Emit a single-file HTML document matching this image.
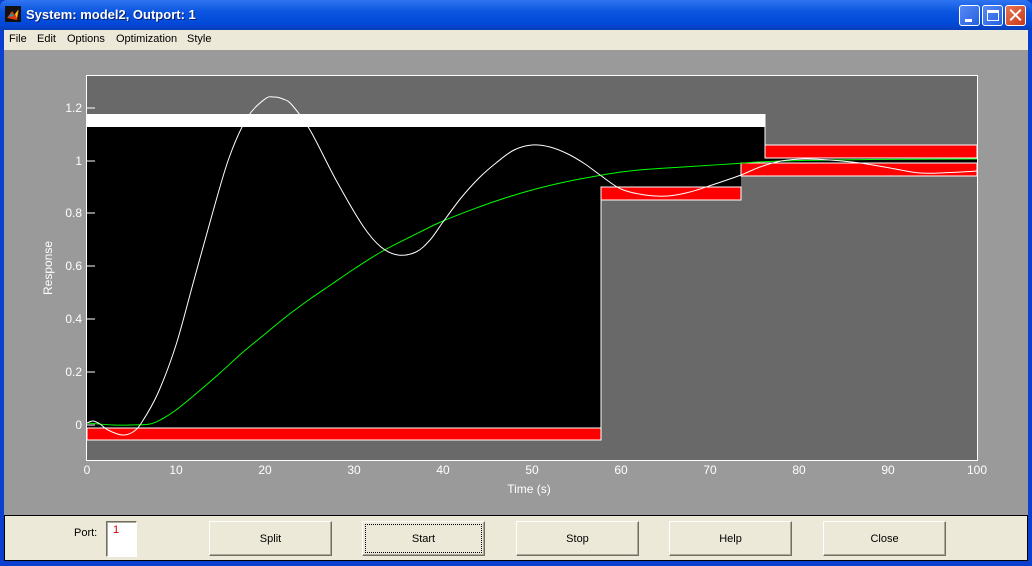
<!DOCTYPE html>
<html><head><style>
*{margin:0;padding:0;box-sizing:border-box}
body{width:1032px;height:566px;overflow:hidden;background:#0a3fd0;font-family:"Liberation Sans",sans-serif;position:relative}
.title{position:absolute;left:0;top:0;width:1032px;height:30px;background:linear-gradient(#2f74f0,#0a55e0 40%,#0148d8 80%,#0a3fb8);border-radius:7px 7px 0 0}
.title span{position:absolute;left:26px;top:7px;color:#fff;font-weight:bold;font-size:13px;text-shadow:1px 1px #0a1f70}
.tb{position:absolute;top:5px;width:21px;height:21px;border:1px solid #fff;border-radius:3px;background:linear-gradient(135deg,#5a8af5,#2360e0)}
.menu{position:absolute;left:4px;top:30px;width:1024px;height:20px;background:#ece9d8;font-size:11px}
.menu span{position:absolute;top:3px}
.gray{position:absolute;left:4px;top:50px;width:1024px;height:465px;background:#9a9a9a}
.panel{position:absolute;left:4px;top:515px;width:1024px;height:46px;background:#ece9d8;border:1px solid #000}
.btn{position:absolute;top:521px;height:35px;width:123px;background:#ece9d8;border:1px solid;border-color:#fff #716f64 #716f64 #fff;box-shadow:inset -1px -1px #aca899;font-size:11px;text-align:center;line-height:34px}
svg{position:absolute;left:0;top:0}
</style></head><body>
<div class="title"><svg width="20" height="20" style="left:5px;top:6px"><rect width="16" height="16" fill="#111"/><path d="M2 12 L7 5 L10 9 L14 3 L12 14 Z" fill="#e03a10"/><path d="M3 11 L7 7 L9 10Z" fill="#3a8aa0"/><path d="M10 8 L13 4 L12 12Z" fill="#f5d020"/></svg><span>System: model2, Outport: 1</span>
<div class="tb" style="left:959px"><div style="position:absolute;left:5px;top:13px;width:7px;height:3px;background:#fff"></div></div>
<div class="tb" style="left:982px"><div style="position:absolute;left:4px;top:4px;width:12px;height:11px;border:1px solid #fff;border-top-width:3px"></div></div>
<div class="tb" style="left:1005px;background:linear-gradient(135deg,#e8764f,#c8381a)"><div style="position:absolute;left:2px;top:8px;width:15px;height:2px;background:#fff;transform:rotate(45deg)"></div><div style="position:absolute;left:2px;top:8px;width:15px;height:2px;background:#fff;transform:rotate(-45deg)"></div></div>
</div>
<div class="menu"><span style="left:5px">File</span><span style="left:33px">Edit</span><span style="left:63px">Options</span><span style="left:112px">Optimization</span><span style="left:183px">Style</span></div>
<div class="gray"></div>
<svg width="1032" height="566" font-family="Liberation Sans" font-size="12" fill="#fff">
<rect x="86.5" y="75.5" width="891" height="385" fill="#696969" stroke="#fff"/>
<rect x="87" y="114" width="678" height="13" fill="#fff"/>
<polygon points="87,127 765,127 765,158 977,158 977,163 741,163 741,187 601,187 601,428 87,428" fill="#000"/>
<rect x="87" y="428" width="514" height="12" fill="#f00" stroke="#fff"/>
<rect x="601" y="187" width="140" height="13" fill="#f00" stroke="#fff"/>
<rect x="765" y="145" width="212" height="13" fill="#f00" stroke="#fff"/>
<rect x="741" y="163" width="236" height="13" fill="#f00" stroke="#fff"/>
<line x1="601" y1="200" x2="601" y2="428" stroke="#fff"/>
<line x1="765" y1="114" x2="765" y2="145" stroke="#fff"/>
<polyline class="sm" fill="none" stroke="#0f0" points="87,423 113,425 131,425 150,424 162,419 176,410 198,392 220,373 242,353 265,334 287,316 310,299 332,284 354,269 381,252 412,236 443,221 479,207 505,198 532,190 556,184 580,179 621,172 652,169 683,167 730,164 781,161 870,159.5 977,159"/>
<polyline class="sm" fill="none" stroke="#fff" points="87,423 93,421 100,424 108,430 122,435 133,432 142,422 158,393 176,345 194,280 212,215 229,158 247,118 265,99 274,97 283,99 292,105 310,130 336,180 363,226 381,247 398,255 416,252 430,240 443,222 461,198 479,178 496,163 514,150 532,145 550,147 568,154 585,164 600,175 621,189 645,195 668,196 690,192 715,184 741,175 760,167 781,161 805,159 830,160 860,163 890,168 920,173 950,172.5 977,171"/>
<g stroke="#fff">
<line x1="87" y1="425" x2="95" y2="425"/><line x1="87" y1="372" x2="95" y2="372"/><line x1="87" y1="319" x2="95" y2="319"/><line x1="87" y1="266" x2="95" y2="266"/><line x1="87" y1="213" x2="95" y2="213"/><line x1="87" y1="161" x2="95" y2="161"/><line x1="87" y1="108" x2="95" y2="108"/>
</g>
<g text-anchor="end"><text x="82" y="429">0</text><text x="82" y="376">0.2</text><text x="82" y="323">0.4</text><text x="82" y="270">0.6</text><text x="82" y="217">0.8</text><text x="82" y="165">1</text><text x="82" y="112">1.2</text></g>
<g text-anchor="middle"><text x="87" y="474">0</text><text x="176" y="474">10</text><text x="265" y="474">20</text><text x="354" y="474">30</text><text x="443" y="474">40</text><text x="532" y="474">50</text><text x="621" y="474">60</text><text x="710" y="474">70</text><text x="799" y="474">80</text><text x="888" y="474">90</text><text x="977" y="474">100</text>
<text x="529" y="493">Time (s)</text>
<text transform="translate(52,268) rotate(-90)">Response</text></g>
</svg>
<div class="panel"></div>
<div style="position:absolute;left:74px;top:527px;font-size:11px">Port:</div>
<div style="position:absolute;left:106px;top:521px;width:31px;height:36px;background:#fff;border:1px solid;border-color:#716f64 #fff #fff #716f64;box-shadow:inset 1px 1px #aca899;color:#c00;font-size:11px;padding:2px 0 0 6px">1</div>
<div class="btn" style="left:209px">Split</div>
<div class="btn" style="left:362px"><div style="position:absolute;left:2px;top:2px;right:2px;bottom:2px;border:1px dotted #000"></div>Start</div>
<div class="btn" style="left:516px">Stop</div>
<div class="btn" style="left:669px">Help</div>
<div class="btn" style="left:823px">Close</div>
<script>
document.querySelectorAll('polyline.sm').forEach(function(pl){
var p=pl.getAttribute('points').trim().split(/\s+/).map(function(s){return s.split(',').map(Number)});
var d='M'+p[0][0]+' '+p[0][1];
for(var i=0;i<p.length-1;i++){var a=p[i-1]||p[i],b=p[i],c=p[i+1],e=p[i+2]||c;
d+=' C'+(b[0]+(c[0]-a[0])/6)+' '+(b[1]+(c[1]-a[1])/6)+' '+(c[0]-(e[0]-b[0])/6)+' '+(c[1]-(e[1]-b[1])/6)+' '+c[0]+' '+c[1];}
var path=document.createElementNS('http://www.w3.org/2000/svg','path');
path.setAttribute('d',d);path.setAttribute('fill','none');path.setAttribute('stroke',pl.getAttribute('stroke'));
pl.parentNode.replaceChild(path,pl);});
</script>
</body></html>
